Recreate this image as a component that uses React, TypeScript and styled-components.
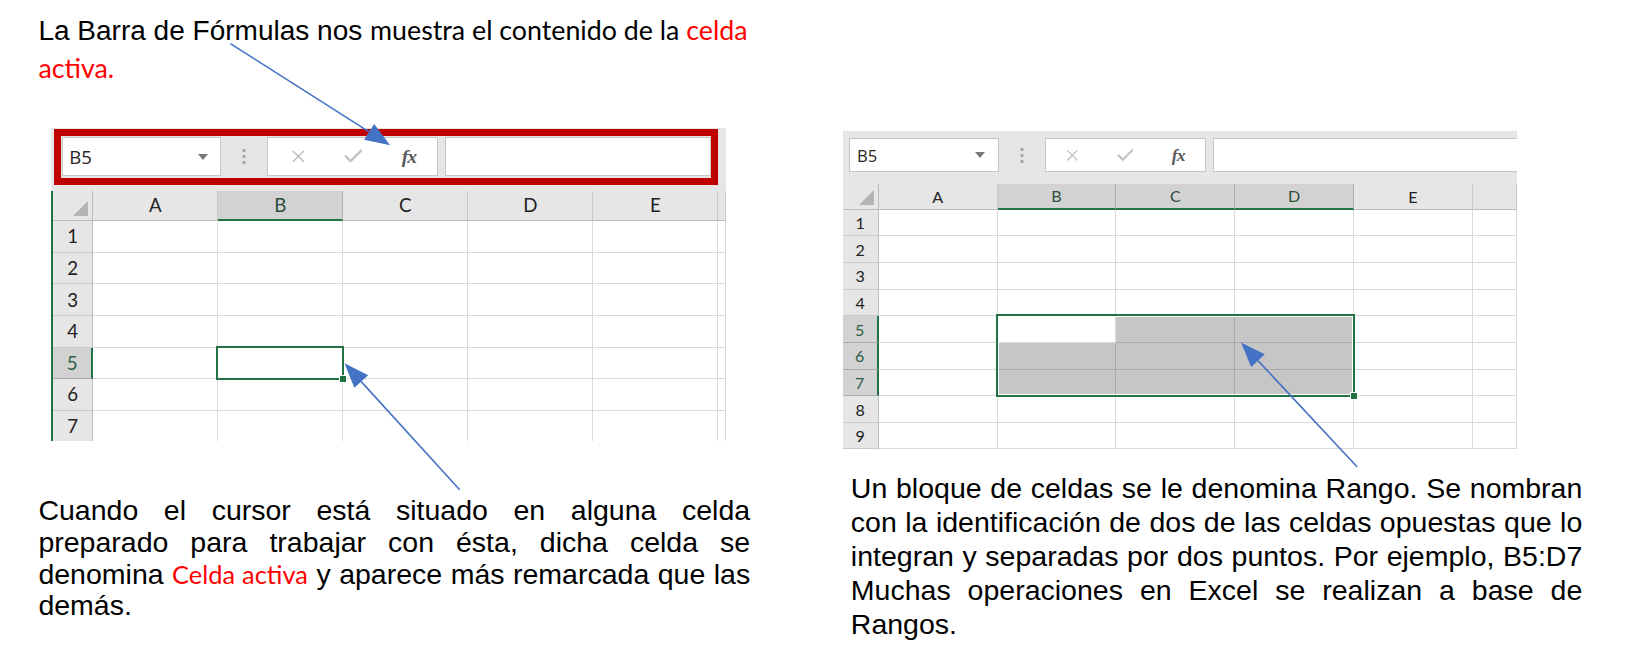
import styled, { createGlobalStyle, css } from "styled-components";
import { X, Check } from "lucide-react";

// measurements were taken off the reference at 1568px wide; the page is 1627px
const K = 1627 / 1568;
const u = (v: number) => Math.round(v * K * 100) / 100;

const GlobalStyle = createGlobalStyle`
  *, *::before, *::after { box-sizing: border-box; }
  html, body { margin: 0; padding: 0; background: #fff; }
  body { font-family: "Liberation Sans", Arial, sans-serif; color: #000; }
`;

const Page = styled.div`
  position: relative;
  width: 1627px;
  height: 658px;
  display: flex;
  align-items: flex-start;
  padding-left: ${u(37)}px;
  overflow: hidden;
`;

const LeftColumn = styled.div`
  width: ${u(686)}px;
  padding-top: ${u(12)}px;
  display: flex;
  flex-direction: column;
`;

const RightColumn = styled.div`
  margin-left: ${u(89)}px;
  width: ${u(714)}px;
  padding-top: ${u(126)}px;
  display: flex;
  flex-direction: column;
`;

const TopNote = styled.p`
  margin: 0;
  font-size: ${u(27)}px;
  line-height: ${u(36)}px;
  white-space: nowrap;
`;

const Calibri = styled.span<{ $red?: boolean; $fs?: number }>`
  font-family: Lato, "Noto Sans", sans-serif;
  font-size: ${(p) => u(p.$fs ?? 25.8)}px;
  color: ${(p) => (p.$red ? "#ff0000" : "inherit")};
`;

const Note = styled.p<{ $w: number; $lh: number; $mt: number; $ml?: number }>`
  margin: ${(p) => u(p.$mt)}px 0 0 ${(p) => u(p.$ml ?? 0)}px;
  width: ${(p) => u(p.$w)}px;
  font-size: ${u(27.5)}px;
  line-height: ${(p) => u(p.$lh)}px;
  text-align: justify;
`;

/* ---------- spreadsheet ---------- */

const SheetFrame = styled.div<{ $w: number; $h: number; $ml?: number; $mt?: number }>`
  width: ${(p) => u(p.$w)}px;
  height: ${(p) => u(p.$h)}px;
  margin: ${(p) => u(p.$mt ?? 0)}px 0 0 ${(p) => u(p.$ml ?? 0)}px;
  background: #e6e6e6;
  overflow: hidden;
  display: flex;
  flex-direction: column;
`;

const FormulaBar = styled.div<{ $h: number; $pt: number; $pl: number }>`
  flex: none;
  height: ${(p) => u(p.$h)}px;
  padding: ${(p) => u(p.$pt)}px 0 0 ${(p) => u(p.$pl)}px;
  display: flex;
  align-items: flex-start;
`;

const BarFrame = styled.div<{ $highlight: boolean; $w?: number; $h: number }>`
  display: flex;
  align-items: center;
  height: ${(p) => u(p.$h)}px;
  ${(p) => (p.$w ? `width: ${u(p.$w)}px;` : "flex: 1;")}
  ${(p) =>
    p.$highlight &&
    css`
      border: ${u(7)}px solid #c00000;
      padding-left: 1px;
    `}
`;

const NameBox = styled.div<{ $w: number; $h: number; $fs: number; $pl: number; $pr: number }>`
  width: ${(p) => u(p.$w)}px;
  height: ${(p) => u(p.$h)}px;
  flex: none;
  background: #fff;
  border: 1px solid #c6c6c6;
  display: flex;
  align-items: center;
  justify-content: space-between;
  padding: 0 ${(p) => u(p.$pr)}px 0 ${(p) => u(p.$pl)}px;
  font-family: "Open Sans", "Noto Sans", sans-serif;
  font-size: ${(p) => u(p.$fs)}px;
  color: #262626;
`;

const Caret = styled.span`
  width: 0;
  height: 0;
  border-left: 5px solid transparent;
  border-right: 5px solid transparent;
  border-top: 6px solid #7a7a7a;
`;

const Dots = styled.div<{ $w: number }>`
  width: ${(p) => u(p.$w)}px;
  flex: none;
  display: flex;
  justify-content: center;
  align-items: center;
`;

const ButtonsBox = styled.div<{ $w: number; $h: number; $pl: number }>`
  width: ${(p) => u(p.$w)}px;
  height: ${(p) => u(p.$h)}px;
  flex: none;
  background: #fff;
  border: 1px solid #c6c6c6;
  display: flex;
  align-items: center;
  padding-left: ${(p) => u(p.$pl)}px;
`;

const IconSlot = styled.div<{ $w: number }>`
  width: ${(p) => u(p.$w)}px;
  display: flex;
  justify-content: center;
  align-items: center;
`;

const Fx = styled.span<{ $fs: number }>`
  font-family: "Liberation Serif", "Times New Roman", serif;
  font-style: italic;
  font-weight: bold;
  font-size: ${(p) => u(p.$fs)}px;
  color: #5a5a5a;
  letter-spacing: -1px;
`;

const FormulaInput = styled.div<{ $h: number; $open?: boolean }>`
  flex: 1;
  height: ${(p) => u(p.$h)}px;
  margin-left: ${u(7)}px;
  background: #fff;
  border: 1px solid #c6c6c6;
  ${(p) => p.$open && "border-right: none;"}
`;

const Grid = styled.div<{ $cols: string; $rows: string; $edge: boolean; $fs: number }>`
  flex: none;
  display: grid;
  grid-template-columns: ${(p) => p.$cols};
  grid-template-rows: ${(p) => p.$rows};
  background: #fff;
  font-family: Lato, "Noto Sans", sans-serif;
  font-size: ${(p) => u(p.$fs)}px;
  ${(p) => p.$edge && "border-left: 2px solid #217346;"}
`;

const Placed = styled.div<{ $r: number; $c: number }>`
  grid-row: ${(p) => p.$r};
  grid-column: ${(p) => p.$c};
`;

const Corner = styled(Placed)`
  background: #e6e6e6;
  border-right: 1px solid #bcbcbc;
  border-bottom: 1px solid #bcbcbc;
  display: flex;
  align-items: flex-end;
  justify-content: flex-end;
  padding: 0 4px 4px 0;
`;

const ColHead = styled(Placed)<{ $on: boolean }>`
  display: flex;
  align-items: center;
  justify-content: center;
  background: ${(p) => (p.$on ? "#d2d2d2" : "#e6e6e6")};
  color: ${(p) => (p.$on ? "#2c4f3b" : "#222")};
  border-right: 1px solid ${(p) => (p.$on ? "#ababab" : "#c8c8c8")};
  border-bottom: ${(p) => (p.$on ? "2px solid #217346" : "1px solid #bcbcbc")};
`;

const RowHead = styled(Placed)<{ $on: boolean }>`
  display: flex;
  align-items: center;
  justify-content: center;
  background: ${(p) => (p.$on ? "#d2d2d2" : "#e6e6e6")};
  color: ${(p) => (p.$on ? "#2e5e43" : "#222")};
  border-bottom: 1px solid ${(p) => (p.$on ? "#ababab" : "#c8c8c8")};
  border-right: ${(p) => (p.$on ? "2px solid #217346" : "1px solid #bcbcbc")};
`;

const Cell = styled(Placed)<{ $fill: boolean }>`
  background: ${(p) => (p.$fill ? "#c6c6c6" : "#fff")};
  border-right: 1px solid ${(p) => (p.$fill ? "#a9a9a9" : "#dadada")};
  border-bottom: 1px solid ${(p) => (p.$fill ? "#a9a9a9" : "#dadada")};
`;

const Selection = styled.div<{ $cols: string; $rows: string }>`
  grid-column: ${(p) => p.$cols};
  grid-row: ${(p) => p.$rows};
  margin: -2px -1px -1px -2px;
  border: 2px solid #217346;
  box-shadow: inset 0 0 0 1px #fff;
  position: relative;
  z-index: 2;
  &::after {
    content: "";
    position: absolute;
    right: -5px;
    bottom: -5px;
    width: 8px;
    height: 8px;
    background: #217346;
    border: 1px solid #fff;
  }
`;

const ArrowLayer = styled.svg`
  position: absolute;
  left: 0;
  top: 0;
  pointer-events: none;
  z-index: 5;
`;

type BarSpec = {
  height: number;
  pt: number;
  pl: number;
  highlight: boolean;
  frameW?: number;
  frameH: number;
  boxH: number;
  nameW: number;
  namePl: number;
  namePr: number;
  nameFs: number;
  dotsW: number;
  btnW: number;
  btnPl: number;
  slotW: number;
  iconSize: number;
  fxFs: number;
};

type SheetSpec = {
  width: number;
  height: number;
  ml?: number;
  mt?: number;
  edge: boolean;
  rowHeader: number;
  colWidth: number;
  headHeight: number;
  rowHeight: number;
  rows: number;
  fontSize: number;
  sel: { c1: number; c2: number; r1: number; r2: number };
  bar: BarSpec;
};

const LETTERS = ["A", "B", "C", "D", "E", ""];

function DotsIcon() {
  return (
    <svg width="4" height="17" viewBox="0 0 4 17">
      <rect x="0.5" y="1" width="3" height="3" fill="#a6a6a6" />
      <rect x="0.5" y="7" width="3" height="3" fill="#a6a6a6" />
      <rect x="0.5" y="13" width="3" height="3" fill="#a6a6a6" />
    </svg>
  );
}

function Sheet({ spec }: { spec: SheetSpec }) {
  const { bar, sel } = spec;
  const cols = `${u(spec.rowHeader)}px repeat(5, ${u(spec.colWidth)}px) 1fr`;
  const rows = `${u(spec.headHeight)}px repeat(${spec.rows}, ${u(spec.rowHeight)}px)`;
  const inCols = (c: number) => c >= sel.c1 && c <= sel.c2;
  const inRows = (r: number) => r >= sel.r1 && r <= sel.r2;

  const body = [];
  for (let r = 1; r <= spec.rows; r++) {
    body.push(
      <RowHead key={`h${r}`} $r={r + 1} $c={1} $on={inRows(r)}>
        {r}
      </RowHead>
    );
    for (let c = 0; c < LETTERS.length; c++) {
      const fill = inRows(r) && inCols(c) && !(r === sel.r1 && c === sel.c1);
      body.push(<Cell key={`c${r}-${c}`} $r={r + 1} $c={c + 2} $fill={fill} />);
    }
  }

  return (
    <SheetFrame $w={spec.width} $h={spec.height} $ml={spec.ml} $mt={spec.mt}>
      <FormulaBar $h={bar.height} $pt={bar.pt} $pl={bar.pl}>
        <BarFrame $highlight={bar.highlight} $w={bar.frameW} $h={bar.frameH}>
          <NameBox $w={bar.nameW} $h={bar.boxH} $fs={bar.nameFs} $pl={bar.namePl} $pr={bar.namePr}>
            B5
            <Caret />
          </NameBox>
          <Dots $w={bar.dotsW}>
            <DotsIcon />
          </Dots>
          <ButtonsBox $w={bar.btnW} $h={bar.boxH} $pl={bar.btnPl}>
            <IconSlot $w={bar.slotW}>
              <X size={u(bar.iconSize)} color="#bdbdbd" strokeWidth={1.6} />
            </IconSlot>
            <IconSlot $w={bar.slotW}>
              <Check size={u(bar.iconSize + 2)} color="#c4c4c4" strokeWidth={2.6} />
            </IconSlot>
            <IconSlot $w={bar.slotW}>
              <Fx $fs={bar.fxFs}>fx</Fx>
            </IconSlot>
          </ButtonsBox>
          <FormulaInput $h={bar.boxH} $open={!bar.highlight} />
        </BarFrame>
      </FormulaBar>
      <Grid $cols={cols} $rows={rows} $edge={spec.edge} $fs={spec.fontSize}>
        <Corner $r={1} $c={1}>
          <svg width="15" height="15" viewBox="0 0 14 14">
            <polygon points="14,0 14,14 0,14" fill="#b4b4b4" />
          </svg>
        </Corner>
        {LETTERS.map((l, i) => (
          <ColHead key={`col${i}`} $r={1} $c={i + 2} $on={inCols(i)}>
            {l}
          </ColHead>
        ))}
        {body}
        <Selection $cols={`${sel.c1 + 2} / ${sel.c2 + 3}`} $rows={`${sel.r1 + 1} / ${sel.r2 + 2}`} />
      </Grid>
    </SheetFrame>
  );
}

const leftSheet: SheetSpec = {
  width: 651,
  height: 302,
  ml: 12,
  mt: 39,
  edge: true,
  rowHeader: 39,
  colWidth: 120.5,
  headHeight: 29,
  rowHeight: 30.5,
  rows: 7,
  fontSize: 18,
  sel: { c1: 1, c2: 1, r1: 5, r2: 5 },
  bar: {
    height: 61,
    pt: 1,
    pl: 3,
    highlight: true,
    frameW: 640,
    frameH: 54,
    boxH: 38,
    nameW: 153,
    namePl: 6,
    namePr: 11,
    nameFs: 18,
    dotsW: 45,
    btnW: 164,
    btnPl: 2,
    slotW: 55,
    iconSize: 20,
    fxFs: 19,
  },
};

const rightSheet: SheetSpec = {
  width: 650,
  height: 307,
  edge: false,
  rowHeader: 35,
  colWidth: 114.5,
  headHeight: 25,
  rowHeight: 25.7,
  rows: 9,
  fontSize: 15.5,
  sel: { c1: 1, c2: 3, r1: 5, r2: 7 },
  bar: {
    height: 51,
    pt: 7,
    pl: 6,
    highlight: false,
    frameH: 33,
    boxH: 33,
    nameW: 145,
    namePl: 7,
    namePr: 13,
    nameFs: 16,
    dotsW: 44,
    btnW: 155,
    btnPl: 0,
    slotW: 52,
    iconSize: 18,
    fxFs: 17,
  },
};

const arrows = [
  { x1: 222, y1: 42, x2: 376, y2: 140 },
  { x1: 443, y1: 472, x2: 332, y2: 350 },
  { x1: 1308, y1: 450, x2: 1196, y2: 330 },
];

function Arrow({ x1, y1, x2, y2 }: { x1: number; y1: number; x2: number; y2: number }) {
  const [ax, ay, bx0, by0] = [u(x1), u(y1), u(x2), u(y2)];
  const dx = bx0 - ax;
  const dy = by0 - ay;
  const len = Math.hypot(dx, dy);
  const ux = dx / len;
  const uy = dy / len;
  const head = u(24);
  const half = u(9);
  const bx = bx0 - ux * head;
  const by = by0 - uy * head;
  const px = -uy * half;
  const py = ux * half;
  return (
    <g>
      <line x1={ax} y1={ay} x2={bx} y2={by} stroke="#4472c4" strokeWidth={1.6} />
      <polygon points={`${bx0},${by0} ${bx + px},${by + py} ${bx - px},${by - py}`} fill="#4472c4" />
    </g>
  );
}

export default function App() {
  return (
    <>
      <GlobalStyle />
      <Page>
        <LeftColumn>
          <TopNote>
            La Barra de Fórmulas nos <Calibri>muestra el contenido de la </Calibri>
            <Calibri $red>celda</Calibri>
            <br />
            <Calibri $red>activa.</Calibri>
          </TopNote>
          <Sheet spec={leftSheet} />
          <Note $w={686} $lh={30.7} $mt={52}>
            Cuando el cursor está situado en alguna celda preparado para trabajar con ésta, dicha celda se
            denomina <Calibri $red $fs={24.5}>Celda activa</Calibri> y aparece más remarcada que las demás.
          </Note>
        </LeftColumn>
        <RightColumn>
          <Sheet spec={rightSheet} />
          <Note $w={705} $lh={32.7} $mt={22} $ml={8}>
            Un bloque de celdas se le denomina Rango. Se nombran con la identificación de dos de las celdas
            opuestas que lo integran y separadas por dos puntos. Por ejemplo, B5:D7 Muchas operaciones en Excel
            se realizan a base de Rangos.
          </Note>
        </RightColumn>
        <ArrowLayer width={1627} height={658} viewBox="0 0 1627 658">
          {arrows.map((a, i) => (
            <Arrow key={i} {...a} />
          ))}
        </ArrowLayer>
      </Page>
    </>
  );
}
